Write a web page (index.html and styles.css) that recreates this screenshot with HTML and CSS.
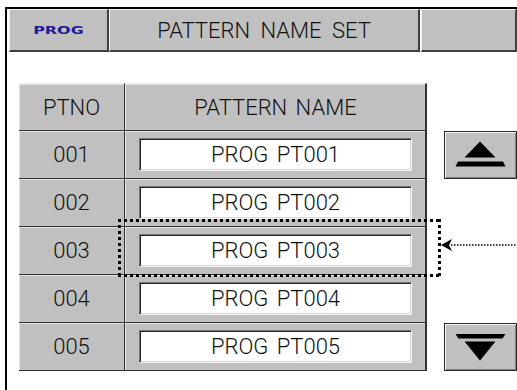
FILE: index.html
```html
<!DOCTYPE html>
<html lang="en">
<head>
    <meta charset="UTF-8">
    <meta name="viewport" content="width=device-width, initial-scale=1.0">
    <title>Pattern Name Set</title>
    <link rel="stylesheet" href="styles.css">
</head>
<body>
    <div class="screen">
        <div class="topbar">
            <div class="tab tab-prog"><span class="prog-label">PROG</span></div>
            <div class="tab tab-title">PATTERN NAME SET</div>
            <div class="tab tab-blank"></div>
        </div>

        <div class="content">
            <div class="ptable">
                <div class="cell head">PTNO</div>
                <div class="cell head name">PATTERN NAME</div>

                <div class="cell">001</div>
                <div class="cell name"><div class="name-box">PROG PT001</div></div>

                <div class="cell">002</div>
                <div class="cell name"><div class="name-box">PROG PT002</div></div>

                <div class="cell">003</div>
                <div class="cell name"><div class="name-box">PROG PT003</div></div>

                <div class="cell">004</div>
                <div class="cell name"><div class="name-box">PROG PT004</div></div>

                <div class="cell">005</div>
                <div class="cell name"><div class="name-box">PROG PT005</div></div>
            </div>

            <div class="scroll">
                <button class="scroll-btn" type="button">
                    <svg viewBox="1 1 71 46" width="71" height="46">
                        <path d="M36 10.5 L51.5 26.5 L20.5 26.5 Z" fill="#000"/>
                        <path d="M14 30.5 L59 30.5 L61.5 35.5 L11.5 35.5 Z" fill="#000"/>
                    </svg>
                </button>
                <button class="scroll-btn" type="button">
                    <svg viewBox="1 1 71 46" width="71" height="46">
                        <path d="M11.5 11 L61.5 11 L58.5 15.5 L14.5 15.5 Z" fill="#000"/>
                        <path d="M20.5 18.5 L51.5 18.5 L36 37.5 Z" fill="#000"/>
                    </svg>
                </button>
            </div>

            <!-- selection marker over row 003 -->
            <div class="select-mark"></div>
            <svg class="pointer" viewBox="0 0 78 14" width="78" height="14">
                <path d="M2 7 L13 1 L10 7 L13 13 Z" fill="#000"/>
                <line x1="12" y1="7" x2="78" y2="7" stroke="#000" stroke-width="1.5" stroke-dasharray="1.5 1.5"/>
            </svg>
        </div>
    </div>
</body>
</html>
```

FILE: styles.css
```css
body {
    margin: 0;
    background-color: #fff;
    font-family: Roboto, "DejaVu Sans Condensed", sans-serif;
    font-weight: 300;
    color: #111;
}
.screen {
    margin: 7px 0 0 5px;
    height: 383px;
    box-sizing: border-box;
    border-top: 2px solid #000;
    border-left: 2px solid #000;
    padding-left: 2px;
}
.topbar {
    display: flex;
    height: 43px;
}
.tab {
    box-sizing: border-box;
    display: flex;
    align-items: center;
    justify-content: center;
    background-color: #c0c0c0;
    border-top: 1px solid #f2f2f2;
    border-left: 1px solid #f2f2f2;
    border-right: 2px solid #404040;
    border-bottom: 2px solid #404040;
    font-size: 22px;
}
.tab-prog {
    width: 100px;
}
.tab-title {
    width: 311px;
    word-spacing: 5px;
}
.tab-blank {
    flex: 1;
    margin-left: 1px;
}
.prog-label {
    display: inline-block;
    font-family: "DejaVu Sans", sans-serif;
    font-weight: bold;
    font-size: 11px;
    color: #1c1c98;
    transform: scaleX(1.45);
}
.content {
    position: relative;
    display: flex;
    align-items: flex-start;
    margin-top: 31px;
    padding-left: 10px;
}
.ptable {
    display: grid;
    grid-template-columns: 106px 302px;
    grid-auto-rows: 48px;
}
.cell {
    box-sizing: border-box;
    display: flex;
    align-items: center;
    justify-content: center;
    background-color: #c0c0c0;
    border-right: 1px solid #333;
    border-bottom: 1px solid #333;
    box-shadow: inset 1px 1px 0 #e4e4e4;
    font-size: 22px;
}
.cell.head {
    border-top: 1px solid #ececec;
    word-spacing: 3px;
}
.cell.name {
    border-right-width: 2px;
    padding: 0 13px 0 14px;
}
.name-box {
    box-sizing: border-box;
    width: 100%;
    height: 33px;
    display: flex;
    align-items: center;
    justify-content: center;
    background-color: #fff;
    border: 1px solid;
    border-color: #7a7a7a #f4f4f4 #f4f4f4 #7a7a7a;
    box-shadow: inset 1px 1px 0 #222, inset -1px -1px 0 #d8d8d8;
    word-spacing: 3px;
}
.scroll {
    display: flex;
    flex-direction: column;
    justify-content: space-between;
    margin-left: 17px;
    margin-top: 48px;
    height: 240px;
}
.scroll-btn {
    box-sizing: border-box;
    width: 73px;
    height: 48px;
    padding: 0;
    background-color: #c0c0c0;
    border: 1px solid #2a2a2a;
    box-shadow: inset 1px 1px 0 #f4f4f4, inset -1px -1px 0 #808080;
}
.scroll-btn svg {
    display: block;
}
.select-mark {
    position: absolute;
    left: 109px;
    top: 136px;
    width: 323px;
    height: 58px;
    background:
        repeating-linear-gradient(90deg, #000 0 3px, transparent 3px 6px) top / 100% 3px no-repeat,
        repeating-linear-gradient(90deg, #000 0 3px, transparent 3px 6px) bottom / 100% 3px no-repeat,
        repeating-linear-gradient(180deg, #000 0 3px, transparent 3px 6px) left / 3px 100% no-repeat,
        repeating-linear-gradient(180deg, #000 0 3px, transparent 3px 6px) right / 3px 100% no-repeat;
}
.pointer {
    position: absolute;
    left: 430px;
    top: 155px;
}
```
